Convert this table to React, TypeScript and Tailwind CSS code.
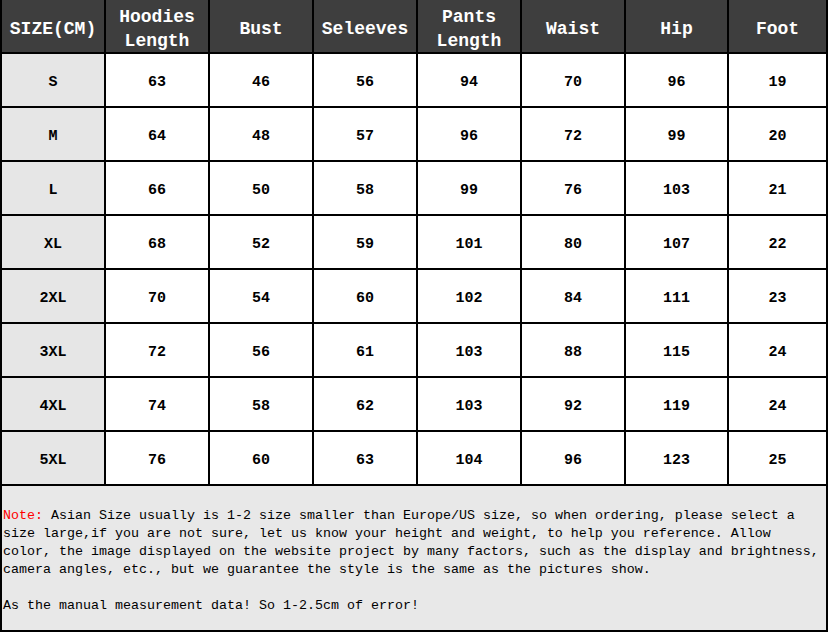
import { FC, Fragment } from "react";

type Row = { size: string; values: number[] };

const headers: string[][] = [
  ["SIZE(CM)"],
  ["Hoodies", "Length"],
  ["Bust"],
  ["Seleeves"],
  ["Pants", "Length"],
  ["Waist"],
  ["Hip"],
  ["Foot"],
];

const rows: Row[] = [
  { size: "S", values: [63, 46, 56, 94, 70, 96, 19] },
  { size: "M", values: [64, 48, 57, 96, 72, 99, 20] },
  { size: "L", values: [66, 50, 58, 99, 76, 103, 21] },
  { size: "XL", values: [68, 52, 59, 101, 80, 107, 22] },
  { size: "2XL", values: [70, 54, 60, 102, 84, 111, 23] },
  { size: "3XL", values: [72, 56, 61, 103, 88, 115, 24] },
  { size: "4XL", values: [74, 58, 62, 103, 92, 119, 24] },
  { size: "5XL", values: [76, 60, 63, 104, 96, 123, 25] },
];

const mono = "font-['Liberation_Mono','DejaVu_Sans_Mono',monospace]";

const App: FC = () => {
  return (
    <div className={`w-[828px] h-[632px] bg-white flex flex-col ${mono}`}>
      <div className="grid grid-cols-[102px_102px_102px_102px_102px_102px_101px_1fr] gap-[2px] bg-black border-x-2 border-b-2 border-black">
        {headers.map((lines, i) => (
          <div
            key={i}
            className="h-[52px] pt-[6px] bg-[#3e3e3e] text-white font-bold text-[18px] leading-[24px] flex flex-col items-center justify-center"
          >
            {lines.map((l) => (
              <span key={l}>{l}</span>
            ))}
          </div>
        ))}
        {rows.map((r) => (
          <Fragment key={r.size}>
            <div className="h-[52px] pt-[6px] bg-[#e6e6e6] text-black font-bold text-[15px] flex items-center justify-center">
              {r.size}
            </div>
            {r.values.map((v, j) => (
              <div
                key={j}
                className="h-[52px] pt-[6px] bg-white text-black font-bold text-[15px] flex items-center justify-center"
              >
                {v}
              </div>
            ))}
          </Fragment>
        ))}
      </div>
      <div className="flex-1 bg-[#e8e8e8] border-x-2 border-b-2 border-black pt-[21px] pl-[1px] text-[13.33px] leading-[18px] text-black">
        <p>
          <span className="text-[#ff0000]">Note: </span>Asian Size usually is
          1-2 size smaller than Europe/US size, so when ordering, please select
          a size large,if you are not sure, let us know your height and weight,
          to help you reference. Allow color, the image displayed on the
          website project by many factors, such as the display and brightness,
          camera angles, etc., but we guarantee the style is the same as the
          pictures show.
        </p>
        <p className="mt-[18px]">
          As the manual measurement data! So 1-2.5cm of error!
        </p>
      </div>
    </div>
  );
};

export default App;
